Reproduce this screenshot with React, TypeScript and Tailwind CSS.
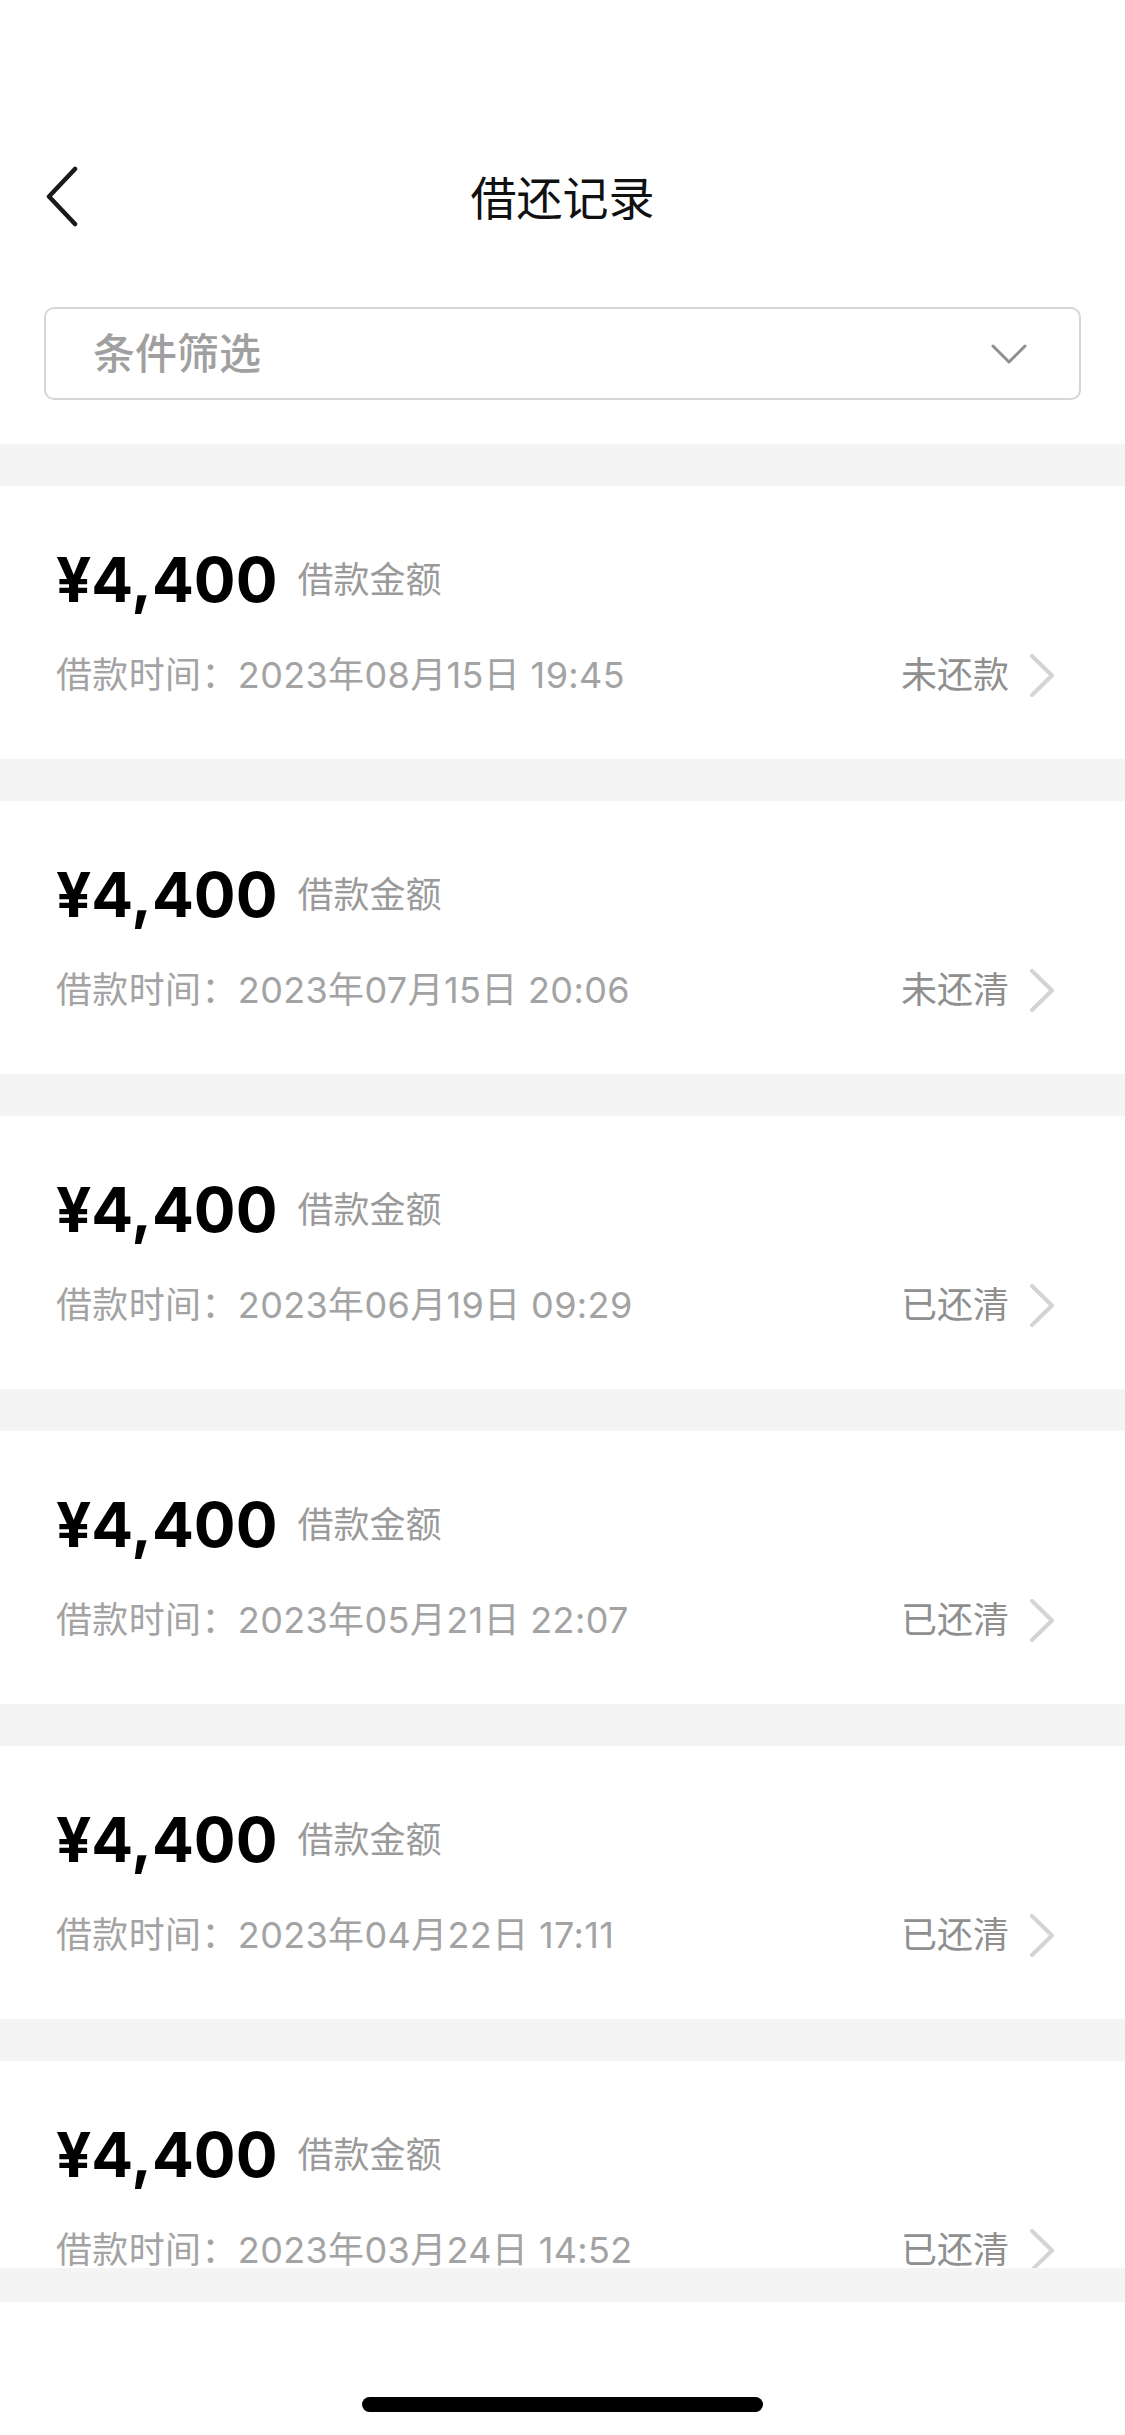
const records = [
    { time: '2023年08月15日 19:45', status: '未还款' },
    { time: '2023年07月15日 20:06', status: '未还清' },
    { time: '2023年06月19日 09:29', status: '已还清' },
    { time: '2023年05月21日 22:07', status: '已还清' },
    { time: '2023年04月22日 17:11', status: '已还清' },
    { time: '2023年03月24日 14:52', status: '已还清' },
]

const font = "font-['Inter','Noto_Sans_CJK_SC',sans-serif]"

const RecordCard = ({ time, status }: { time: string; status: string }) => {
    return (
        <div className="h-[273px] shrink-0 bg-white pl-[56px] pr-[69px] pt-[63px]">
            <div className="flex h-[62px] items-center">
                <span className="text-[62px] font-bold leading-none text-black">
                    ¥4,400
                </span>
                <span className="ml-[20px] text-[36px] leading-none text-[#9a9a9a]">
                    借款金额
                </span>
            </div>
            <div className="mt-[44px] flex h-[40px] items-center justify-between">
                <span className="text-[36px] leading-none tracking-[0.01em] text-[#a3a3a3]">
                    借款时间：{time}
                </span>
                <div className="flex items-center">
                    <span className="text-[36px] leading-none text-[#8f8f8f]">{status}</span>
                    <svg className="ml-[20px]" width="27" height="43" viewBox="0 0 27 43" fill="none">
                        <path d="M3 2 L23 21.5 L3 41" stroke="#d4d4d4" strokeWidth="4" strokeLinecap="round" strokeLinejoin="round"/>
                    </svg>
                </div>
            </div>
        </div>
    )
}

const App = () => {
    return (
        <div className={`${font} flex h-[2435px] w-[1125px] flex-col overflow-hidden bg-white`}>
            <div className="h-[444px] shrink-0 bg-white">
                <div className="relative mt-[148px] flex h-[100px] items-center justify-center">
                    <svg className="absolute left-[45px] top-[18px]" width="34" height="62" viewBox="0 0 34 62" fill="none">
                        <path d="M30 3 L4 30.5 L30 58" stroke="#1a1a1a" strokeWidth="4.5" strokeLinecap="round" strokeLinejoin="round"/>
                    </svg>
                    <h1 className="text-[46px] font-normal leading-none text-[#111]">借还记录</h1>
                </div>
                <div className="mx-[44px] mt-[59px] flex h-[93px] items-center justify-between rounded-[10px] border-2 border-[#d6d6d6] pl-[47px] pr-[52px]">
                    <span className="text-[42px] font-medium leading-none text-[#a0a0a0]">条件筛选</span>
                    <svg width="36" height="22" viewBox="0 0 36 22" fill="none">
                        <path d="M2 3 L18 19 L34 3" stroke="#8f8f8f" strokeWidth="3" strokeLinecap="round" strokeLinejoin="round"/>
                    </svg>
                </div>
            </div>
            <div className="flex h-[1824px] shrink-0 flex-col gap-[42px] overflow-hidden bg-[#f4f4f4] pt-[42px]">
                {records.map((r) => (
                    <RecordCard key={r.time} time={r.time} status={r.status}/>
                ))}
            </div>
            <div className="h-[34px] shrink-0 bg-[#f4f4f4]"/>
            <div className="flex flex-1 justify-center pt-[95px]">
                <div className="h-[15px] w-[401px] rounded-full bg-black"/>
            </div>
        </div>
    )
}

export default App
